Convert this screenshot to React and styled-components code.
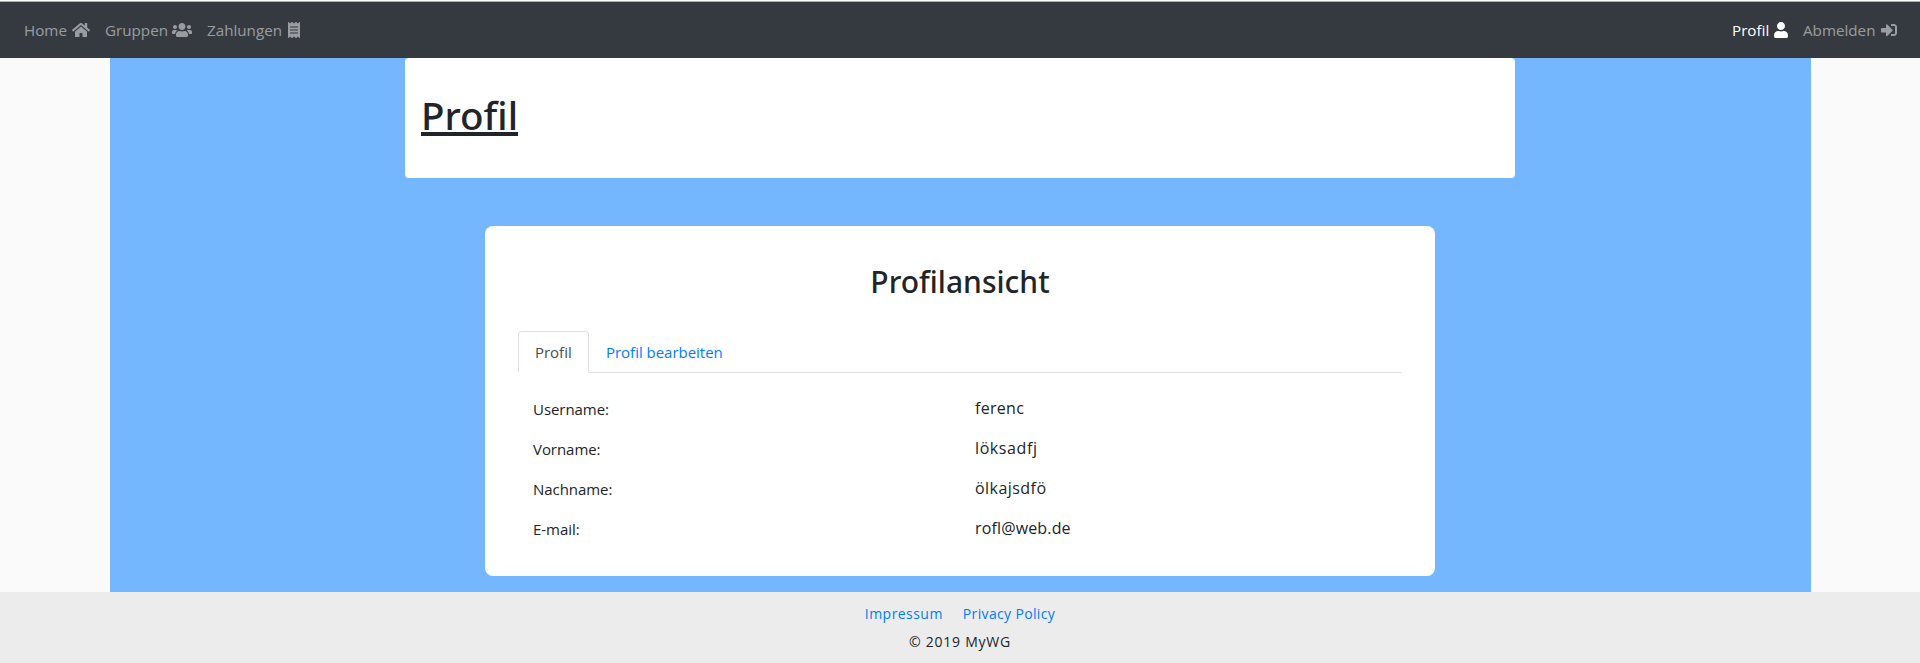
import React from 'react';
import styled, { createGlobalStyle } from 'styled-components';
import { FaHome, FaUsers, FaReceipt, FaUser, FaSignInAlt } from 'react-icons/fa';

const GlobalStyle = createGlobalStyle`
  *, *::before, *::after { box-sizing: border-box; }
  body {
    margin: 0;
    background: #fafafa;
    color: #212529;
    font: 400 15px/24px "Open Sans", "Noto Sans", sans-serif;
  }
`;

const Page = styled.div`
  display: flex;
  flex-direction: column;
  height: 663px;
`;

const Navbar = styled.nav`
  flex: none;
  display: flex;
  justify-content: space-between;
  height: 58px;
  padding: 8px 16px;
  border-top: 1px solid #fdfdfd;
  background: #343a40;
  box-shadow: inset 0 1px 0 #a9adb0;
`;

const NavList = styled.ul`
  display: flex;
  margin: 0;
  padding: 0;
  list-style: none;
`;

const NavLink = styled.a`
  display: flex;
  align-items: center;
  width: ${(p) => p.$width}px;
  height: 42px;
  padding: 0 7px 0 8px;
  color: ${(p) => (p.$active ? '#fff' : 'rgba(255, 255, 255, 0.5)')};
  font-size: 15.2px;
  text-decoration: none;
  white-space: nowrap;

  svg {
    flex: none;
    width: ${(p) => p.$icon}px;
    height: 16px;
    margin-left: auto;
  }
`;

const Main = styled.main`
  flex: none;
  display: flex;
  flex-direction: column;
  align-items: center;
  width: 1701px;
  height: 534px;
  margin: 0 109px 0 110px;
  padding-right: 1px;
  background: #74b7ff;
`;

const TitleCard = styled.header`
  width: 1110px;
  height: 120px;
  padding: 33px 16px 0;
  border-radius: 4px;
  background: #fff;
`;

const Title = styled.h1`
  margin: 0;
  font: 500 38.5px/48px "Noto Sans", "Open Sans", sans-serif;
  text-decoration: underline;
  text-decoration-thickness: 4px;
  text-underline-offset: 2px;
  text-decoration-skip-ink: none;
`;

const ProfileCard = styled.section`
  width: 950px;
  height: 350px;
  margin-top: 48px;
  padding: 37px 33px 0;
  border-radius: 8px;
  background: #fff;
`;

const Subtitle = styled.h2`
  margin: 0 0 30px;
  font: 500 30px/38px "Noto Sans", "Open Sans", sans-serif;
  text-align: center;
`;

const Tabs = styled.div`
  display: flex;
  height: 42px;
  border-bottom: 1px solid #dee2e6;
`;

const Tab = styled.a`
  height: 42px;
  min-width: 71px;
  padding: 8px 16px;
  border: 1px solid;
  border-color: ${(p) => (p.$active ? '#dee2e6 #dee2e6 #fff' : 'transparent')};
  border-radius: 4px 4px 0 0;
  background: ${(p) => (p.$active ? '#fff' : 'transparent')};
  color: ${(p) => (p.$active ? '#495057' : '#007bff')};
  letter-spacing: -0.02px;
  text-decoration: none;
`;

const Details = styled.dl`
  display: grid;
  grid-template-columns: 442px 1fr;
  grid-auto-rows: 40px;
  margin: 0;
  padding: 16px 0 0 15px;
`;

const Label = styled.dt`
  padding-top: 8px;
  letter-spacing: -0.05px;
`;

const Value = styled.dd`
  margin: 0;
  padding-top: 7px;
  font-size: 16px;
  letter-spacing: ${(p) => p.$tracking}px;
`;

const Footer = styled.footer`
  flex: none;
  height: 71px;
  padding-top: 8px;
  background: #ececec;
  font-size: 14px;
  line-height: 28px;
`;

const FooterLinks = styled.div`
  display: flex;
  justify-content: center;
  gap: 20px;
`;

const FooterLink = styled.a`
  color: #007bff;
  letter-spacing: ${(p) => p.$tracking}px;
  text-decoration: none;
`;

const Copyright = styled.div`
  letter-spacing: 0.75px;
  text-align: center;
`;

const details = [
  { label: 'Username:', value: 'ferenc', tracking: 0.3 },
  { label: 'Vorname:', value: 'löksadfj', tracking: 0.6 },
  { label: 'Nachname:', value: 'ölkajsdfö', tracking: 0.45 },
  { label: 'E-mail:', value: 'rofl@web.de', tracking: 0.15 },
];

function NavItem({ text, icon: Icon, iconWidth, width, active }) {
  return (
    <li>
      <NavLink href="#" $active={active} $icon={iconWidth} $width={width}>
        {text}
        <Icon />
      </NavLink>
    </li>
  );
}

export default function App() {
  return (
    <>
      <GlobalStyle />
      <Page>
        <Navbar>
          <NavList>
            <NavItem text="Home" icon={FaHome} iconWidth={18} width={81} />
            <NavItem text="Gruppen" icon={FaUsers} iconWidth={20} width={102} />
            <NavItem text="Zahlungen" icon={FaReceipt} iconWidth={12} width={108} />
          </NavList>
          <NavList>
            <NavItem text="Profil" icon={FaUser} iconWidth={14} width={71} active />
            <NavItem text="Abmelden" icon={FaSignInAlt} iconWidth={16} width={109} />
          </NavList>
        </Navbar>
        <Main>
          <TitleCard>
            <Title>Profil</Title>
          </TitleCard>
          <ProfileCard>
            <Subtitle>Profilansicht</Subtitle>
            <Tabs>
              <Tab href="#" $active>Profil</Tab>
              <Tab href="#">Profil bearbeiten</Tab>
            </Tabs>
            <Details>
              {details.map(({ label, value, tracking }) => (
                <React.Fragment key={label}>
                  <Label>{label}</Label>
                  <Value $tracking={tracking}>{value}</Value>
                </React.Fragment>
              ))}
            </Details>
          </ProfileCard>
        </Main>
        <Footer>
          <FooterLinks>
            <FooterLink href="#" $tracking={0.45}>Impressum</FooterLink>
            <FooterLink href="#" $tracking={0.35}>Privacy Policy</FooterLink>
          </FooterLinks>
          <Copyright>© 2019 MyWG</Copyright>
        </Footer>
      </Page>
    </>
  );
}
